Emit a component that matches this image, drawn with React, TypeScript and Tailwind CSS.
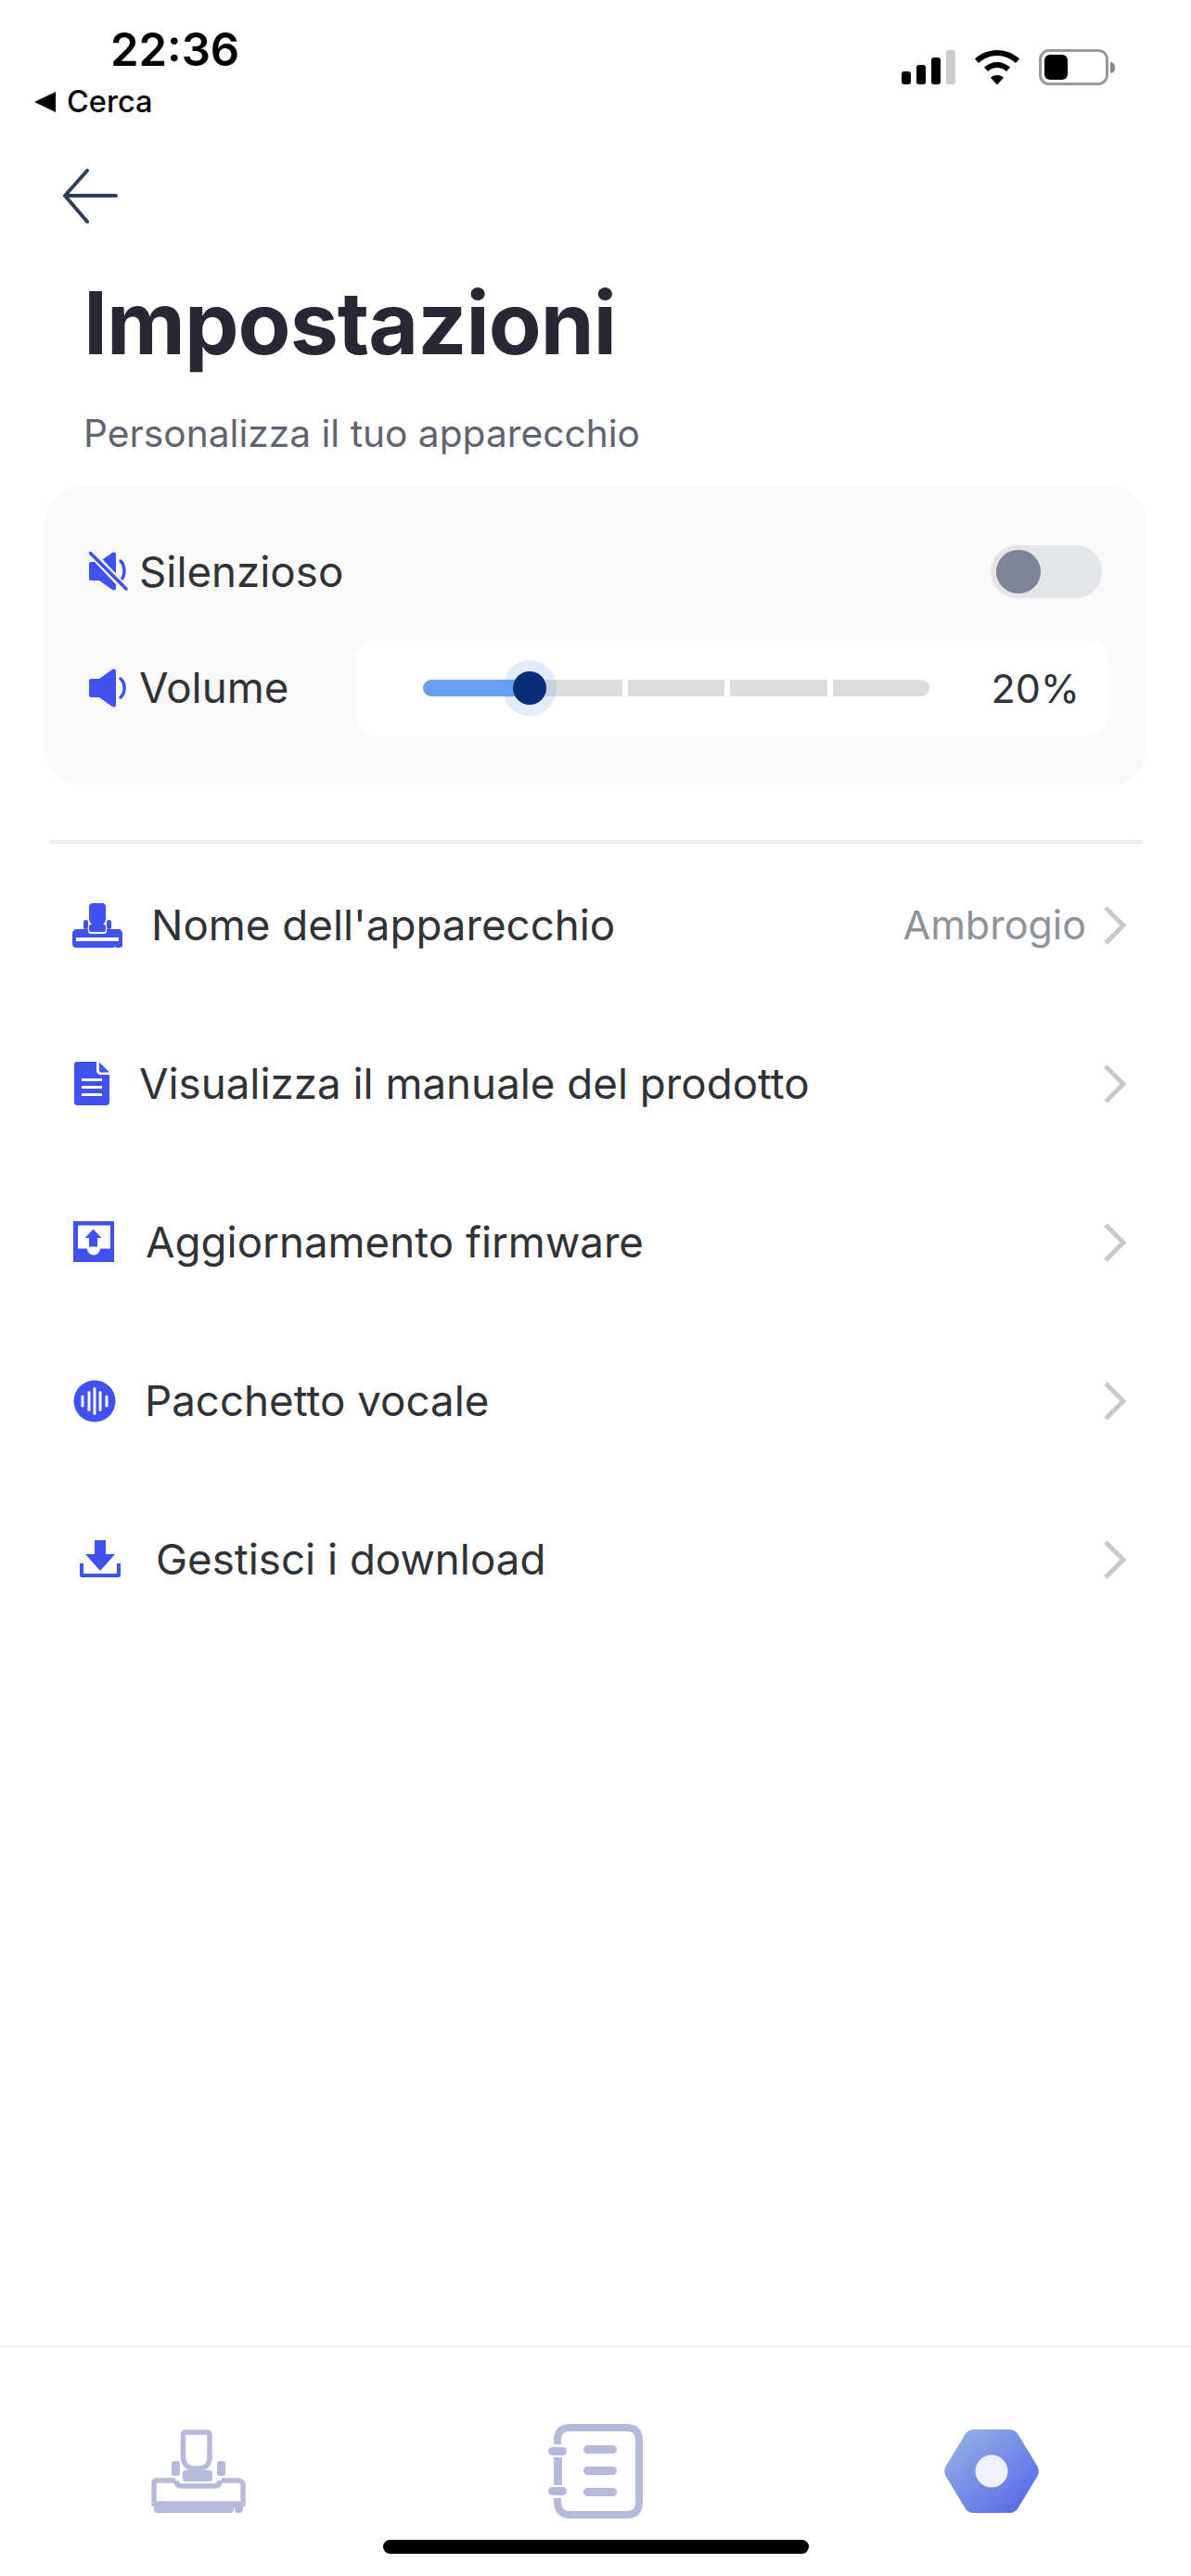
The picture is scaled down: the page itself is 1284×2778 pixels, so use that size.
const BLUE = "#3f51ef";
const LABEL = "text-[45.700px] text-[#303236] leading-none";
const VALUE = "text-[43px] leading-none";

function Wifi() {
  return (
    <svg width="52" height="38" viewBox="0 0 52 38" className="block">
      <path d="M26 0C35 0 43.500 3.500 50 9.500L46 14C40.500 9 33.500 6 26 6S11.500 9 6 14L2 9.500C8.500 3.500 17 0 26 0Z" fill="#000" />
      <path d="M26 13C31 13 36 15 40 18.500L36 23C33.300 20.600 29.800 19 26 19S18.700 20.600 16 23L12 18.500C16 15 21 13 26 13Z" fill="#000" />
      <path d="M26 27C28.800 27 31.300 28 33 29.700L26 37.500L19 29.700C20.700 28 23.200 27 26 27Z" fill="#000" />
    </svg>
  );
}

function StatusIcons() {
  return (
    <div className="flex items-center gap-[19px]">
      <div className="flex items-end gap-[6px] h-[37px]">
        <div className="w-[10px] h-[14px] rounded-[3px] bg-black" />
        <div className="w-[10px] h-[21px] rounded-[3px] bg-black" />
        <div className="w-[10px] h-[29px] rounded-[3px] bg-black" />
        <div className="w-[10px] h-[37px] rounded-[3px] bg-[#cccccc]" />
      </div>
      <Wifi />
      <div className="flex items-center gap-[2px]">
        <div className="w-[75px] h-[39px] rounded-[11px] border-[3px] border-[#999999] p-[3px]">
          <div className="w-[25px] h-[27px] rounded-[6px] bg-black" />
        </div>
        <div className="w-[5px] h-[12px] rounded-r-full bg-[#888888]" />
      </div>
    </div>
  );
}

function Chevron() {
  return (
    <svg width="25" height="42" viewBox="0 0 25 42" fill="none" className="block shrink-0">
      <path d="M2 2L21 21L2 40" stroke="#c9c9c9" strokeWidth="5" />
    </svg>
  );
}

function MuteIcon() {
  return (
    <svg width="44" height="42" viewBox="0 0 44 42" className="block">
      <path d="M4 11H13L27 1C29 0 31 .6 31 2.500V39.500C31 41.500 29 42 27 41L13 31H4C2.800 31 2 30.200 2 29V13C2 11.800 2.800 11 4 11Z" fill={BLUE} />
      <path d="M36 10C41 15 41 25 37 30" stroke={BLUE} strokeWidth="3.500" fill="none" strokeLinecap="round" />
      <path d="M5 2L42 41" stroke="#f9f9f9" strokeWidth="8" />
      <path d="M3.500 1.500L42 40" stroke={BLUE} strokeWidth="3.500" strokeLinecap="round" />
    </svg>
  );
}

function SpeakerIcon() {
  return (
    <svg width="44" height="42" viewBox="0 0 44 42" className="block">
      <path d="M4 11H13L27 1C29 0 31 .6 31 2.500V39.500C31 41.500 29 42 27 41L13 31H4C2.800 31 2 30.200 2 29V13C2 11.800 2.800 11 4 11Z" fill={BLUE} />
      <path d="M36 11C41.500 16 41.500 26 36 31" stroke={BLUE} strokeWidth="3.500" fill="none" strokeLinecap="round" />
    </svg>
  );
}

function DeviceSolidIcon() {
  return (
    <svg width="54" height="48" viewBox="0 0 54 48" className="block">
      <path d="M22 0H32C35 0 36 2 36 4V17C36 20 34 22 32 24H22C20 22 18 20 18 17V4C18 2 19 0 22 0Z" fill={BLUE} />
      <rect x="12" y="18" width="5" height="10" rx="2.500" fill={BLUE} />
      <rect x="37" y="18" width="5" height="10" rx="2.500" fill={BLUE} />
      <rect x="18" y="23" width="18" height="8" rx="2" fill={BLUE} />
      <path d="M5 28H17V30C17 32 18 33 20 33H34C36 33 37 32 37 30V28H49C52 28 54 30 54 33V45C54 47 53 48 51 48H48C46.500 48 46 47 46 46C46 47 45 48 44 48H4C2 48 0 46.500 0 44V33C0 30 2 28 5 28Z" fill={BLUE} />
      <rect x="4" y="37" width="46" height="4" fill="#fff" />
    </svg>
  );
}

function DocIcon() {
  return (
    <svg width="38" height="47" viewBox="0 0 38 47" className="block">
      <path d="M3 0H24V9C24 12 26 14 29 14H38V44C38 46 36 47 35 47H3C1 47 0 45.500 0 44V3C0 1 1.500 0 3 0Z" fill={BLUE} />
      <path d="M27 0.500L38 11.500H29C28 11.500 27 10.500 27 9.500Z" fill={BLUE} />
      <rect x="8" y="18" width="22" height="3" fill="#fff" />
      <rect x="8" y="26" width="22" height="3" fill="#fff" />
      <rect x="8" y="34" width="22" height="3" fill="#fff" />
    </svg>
  );
}

function UploadIcon() {
  return (
    <svg width="44" height="44" viewBox="0 0 44 44" className="block">
      <path d="M0 0H44V44H0ZM5 4.500V29.500H15A7 7 0 0 0 29 29.500H40V4.500Z" fill={BLUE} fillRule="evenodd" />
      <path d="M21.500 8.500L30.500 18H26V27.500H17V18H12.500Z" fill={BLUE} />
    </svg>
  );
}

function VoiceIcon() {
  return (
    <svg width="46" height="46" viewBox="0 0 46 46" className="block">
      <circle cx="23" cy="23" r="22.500" fill={BLUE} />
      <rect x="8.500" y="16.500" width="3" height="13" rx="1.500" fill="#fff" />
      <rect x="15.500" y="12" width="3" height="22" rx="1.500" fill="#fff" />
      <rect x="21.500" y="8" width="3" height="30" rx="1.500" fill="#fff" />
      <rect x="27.500" y="12" width="3" height="22" rx="1.500" fill="#fff" />
      <rect x="34.500" y="16.500" width="3" height="13" rx="1.500" fill="#fff" />
    </svg>
  );
}

function DownloadIcon() {
  return (
    <svg width="44" height="40" viewBox="0 0 44 40" className="block">
      <path d="M16 0H28V15H38L22 33L6 15H16Z" fill={BLUE} />
      <path d="M2 25V38H42V25" stroke={BLUE} strokeWidth="4" fill="none" strokeLinejoin="round" />
    </svg>
  );
}

function NavDevice() {
  const c = "#b6b9d9";
  return (
    <svg width="102" height="90" viewBox="0 0 102 90" className="block">
      <path d="M37 3H60C62 3 63 4 63 6V30C63 38 58 42 52 42H46C40 42 34.500 38 34.500 30V6C34.500 4 35 3 37 3Z" fill="none" stroke={c} strokeWidth="5.500" />
      <rect x="22" y="34" width="9" height="16" rx="3" fill={c} />
      <rect x="71" y="34" width="9" height="16" rx="3" fill={c} />
      <rect x="34" y="44" width="32" height="12" rx="3" fill={c} />
      <path d="M26 55H5C3 55 3 57 3 60V80H99V60C99 57 97 55 93 55H76" fill="none" stroke={c} strokeWidth="5.500" />
      <path d="M27 55C27 60 30 61 33 61H68C72 61 74 59 74 55" fill="none" stroke={c} strokeWidth="5.500" />
      <path d="M3 78H99V85C99 89 97 90 95 90H93C91 90 90 89 90 86V84H89V87C89 89 88 90 86 90H7C5 90 3 89 3 87Z" fill={c} />
    </svg>
  );
}

function NavBook() {
  const c = "#b6b9d9";
  return (
    <svg width="102" height="102" viewBox="0 0 102 102" className="block">
      <path d="M10 22V18C10 8 15 4 24 4H84C94 4 98 9 98 18V84C98 93 94 98 84 98H24C15 98 10 93 10 84V80" fill="none" stroke={c} strokeWidth="8" />
      <rect x="0" y="25" width="20" height="9" rx="4.500" fill={c} />
      <rect x="0" y="68" width="20" height="9" rx="4.500" fill={c} />
      <rect x="6" y="36" width="9" height="30" fill={c} />
      <rect x="38" y="23" width="36" height="9" rx="4.500" fill={c} />
      <rect x="38" y="46" width="36" height="9" rx="4.500" fill={c} />
      <rect x="38" y="69" width="36" height="9" rx="4.500" fill={c} />
    </svg>
  );
}

function NavHex() {
  return (
    <svg width="104" height="90" viewBox="0 0 104 90" className="block -ml-[2px]">
      <defs>
        <linearGradient id="hexg" x1="0.100" y1="0.100" x2="0.850" y2="0.900">
          <stop offset="0" stopColor="#93aee6" />
          <stop offset="1" stopColor="#5b6de8" />
        </linearGradient>
      </defs>
      <path d="M33 0H71C75 0 79 2 81 6L101 39C103.500 43 103.500 47 101 51L81 84C79 88 75 90 71 90H33C29 90 25 88 23 84L3 51C.500 47 .500 43 3 39L23 6C25 2 29 0 33 0Z" fill="url(#hexg)" />
      <circle cx="52" cy="45" r="17.500" fill="#eef0fc" />
    </svg>
  );
}

function Row({ icon, label, value, gap, inset }: { icon: React.ReactNode; label: string; value?: string; gap: string; inset: string }) {
  return (
    <div className="h-[171px] flex items-center pl-[78px] pr-[69px]">
      <div className={`flex items-center ${gap} ${inset}`}>
        {icon}
        <span className={LABEL}>{label}</span>
      </div>
      <div className="ml-auto flex items-center gap-[19px]">
        {value && <span className={`${VALUE} text-[#8f9299]`}>{value}</span>}
        <Chevron />
      </div>
    </div>
  );
}

export default function App() {
  return (
    <div className="w-[1284px] h-[2778px] bg-white flex flex-col overflow-hidden font-['Inter','Liberation_Sans',sans-serif]">
      <div className="h-[134px] flex justify-between pr-[82px]">
        <div className="pl-[37px] pt-[29px]">
          <div className="pl-[82px] text-[49px] leading-[50px] font-semibold text-black">22:36</div>
          <div className="flex items-center gap-[12px] mt-[13px]">
            <div className="w-0 h-0 border-y-[11px] border-y-transparent border-r-[23px] border-r-black" />
            <span className="text-[32.500px] leading-[36px] font-medium text-black">Cerca</span>
          </div>
        </div>
        <div className="pt-[53px]">
          <StatusIcons />
        </div>
      </div>

      <div className="pl-[67px] pt-[48px]">
        <svg width="60" height="60" viewBox="0 0 60 60" fill="none" className="block">
          <path d="M58 29H3M27 2L3 29L27 57" stroke="#2e4057" strokeWidth="4" strokeLinecap="round" strokeLinejoin="round" />
        </svg>
      </div>

      <h1 className="pl-[90px] mt-[51px] text-[93px] leading-[110px] font-bold text-[#272833] tracking-[-1px]">Impostazioni</h1>
      <p className="pl-[90px] mt-[41px] text-[40.700px] leading-[48px] text-[#61636f]">Personalizza il tuo apparecchio</p>

      <section className="mx-[48px] mt-[32px] h-[323px] rounded-[40px] bg-[#f9f9f9] pl-[46px] pr-[41px] pt-[64px]">
        <div className="flex items-center justify-between h-[57px] pr-[5px]">
          <div className="flex items-center gap-[12px]">
            <MuteIcon />
            <span className={LABEL}>Silenzioso</span>
          </div>
          <div className="w-[120px] h-[57px] rounded-full bg-[#e4e5e9] flex items-center pl-[6px] mr-[2px]">
            <div className="w-[48px] h-[47px] rounded-full bg-[#7e8397]" />
          </div>
        </div>
        <div className="flex items-center mt-[46px] h-[102px]">
          <div className="w-[290px] flex items-center gap-[12px]">
            <SpeakerIcon />
            <span className={LABEL}>Volume</span>
          </div>
          <div className="flex-1 h-[102px] rounded-[20px] bg-white flex items-center pl-[72px] pr-[31px]">
            <div className="relative w-[546px] h-[18px] flex gap-[6px]">
              <div className="flex-1 rounded-l-full bg-[#689ff0]" />
              <div className="flex-1 bg-[#dcdcdc]" />
              <div className="flex-1 bg-[#dcdcdc]" />
              <div className="flex-1 bg-[#dcdcdc]" />
              <div className="flex-1 rounded-r-full bg-[#dcdcdc]" />
              <div className="absolute left-[100px] top-0 w-[15px] h-[18px] bg-[#689ff0]" />
              <div className="absolute left-[86px] top-[-21px] w-[58px] h-[60px] rounded-full bg-[#6a9cf0]/20 flex items-center justify-center">
                <div className="w-[36px] h-[36px] rounded-full bg-[#0a2d78]" />
              </div>
            </div>
            <span className={`ml-auto ${VALUE} text-[#303236]`}>20%</span>
          </div>
        </div>
      </section>

      <div className="mx-[53px] mt-[59px] h-[4px] bg-[#eeeeee]" />

      <div className="mt-[2px]">
        <Row icon={<DeviceSolidIcon />} label="Nome dell'apparecchio" value="Ambrogio" gap="gap-[31px]" inset="" />
        <Row icon={<DocIcon />} label="Visualizza il manuale del prodotto" gap="gap-[32px]" inset="ml-[2px]" />
        <Row icon={<UploadIcon />} label="Aggiornamento firmware" gap="gap-[34px]" inset="ml-[1px]" />
        <Row icon={<VoiceIcon />} label="Pacchetto vocale" gap="gap-[31px]" inset="ml-[1px]" />
        <Row icon={<DownloadIcon />} label="Gestisci i download" gap="gap-[38px]" inset="ml-[8px]" />
      </div>

      <div className="mt-auto h-[249px] border-t-[3px] border-[#f3f3f3] pt-[82px] relative">
        <div className="flex items-center pl-[163px] gap-[326px]">
          <NavDevice />
          <NavBook />
          <NavHex />
        </div>
        <div className="absolute left-[413px] top-[207px] w-[459px] h-[15px] rounded-full bg-black" />
      </div>
    </div>
  );
}
